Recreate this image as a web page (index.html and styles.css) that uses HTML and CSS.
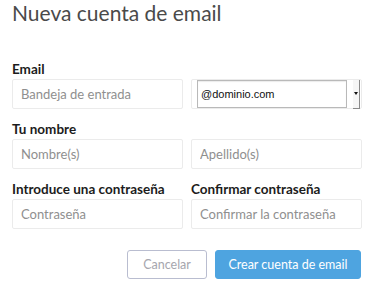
FILE: index.html
```html
<!DOCTYPE html>
<html lang="es">
<head>
    <meta charset="UTF-8">
    <meta name="viewport" content="width=device-width, initial-scale=1.0">
    <title>Nueva cuenta de email</title>
    <link rel="stylesheet" href="styles.css">
</head>
<body>
    <div class="dialog">
        <h1 class="title">Nueva cuenta de email</h1>
        <div class="form">
            <div class="field">
                <label class="label">Email</label>
                <input type="text" class="input" placeholder="Bandeja de entrada">
            </div>
            <div class="field">
                <span class="label"></span>
                <div class="select-wrap">
                    <div class="select-box">@dominio.com</div>
                    <div class="select-btn"><span class="arrow"></span></div>
                </div>
            </div>

            <div class="field">
                <label class="label">Tu nombre</label>
                <input type="text" class="input" placeholder="Nombre(s)">
            </div>
            <div class="field">
                <span class="label"></span>
                <input type="text" class="input" placeholder="Apellido(s)">
            </div>

            <div class="field">
                <label class="label">Introduce una contraseña</label>
                <input type="password" class="input" placeholder="Contraseña">
            </div>
            <div class="field">
                <label class="label">Confirmar contraseña</label>
                <input type="password" class="input" placeholder="Confirmar la contraseña">
            </div>
        </div>
        <div class="actions">
            <button class="btn btn-cancel">Cancelar</button>
            <button class="btn btn-primary">Crear cuenta de email</button>
        </div>
    </div>
</body>
</html>
```

FILE: styles.css
```css
body {
    margin: 0;
    font-family: 'Lato', 'Noto Sans', sans-serif;
    background-color: #ffffff;
    color: #222;
}
.dialog {
    padding: 0 12px;
}
.title {
    margin: 0;
    font-size: 21px;
    line-height: 26px;
    font-weight: 400;
    color: #4a4a4a;
}
.form {
    display: grid;
    grid-template-columns: 1fr 1fr;
    column-gap: 8px;
    row-gap: 12px;
    margin-top: 35px;
}
.field {
    display: flex;
    flex-direction: column;
}
.label {
    display: block;
    height: 16px;
    line-height: 16px;
    font-size: 13.5px;
    font-weight: 700;
    color: #1c1c1c;
    margin-bottom: 2px;
    white-space: nowrap;
}
.input {
    box-sizing: border-box;
    height: 30px;
    width: 100%;
    margin: 0;
    padding: 0 8px;
    border: 1px solid #ebebeb;
    border-radius: 2px;
    font-family: 'Lato', 'Noto Sans', sans-serif;
    font-size: 13px;
    color: #333;
    outline: none;
}
.input::placeholder {
    color: #8f8f8f;
}
.select-wrap {
    box-sizing: border-box;
    height: 30px;
    display: flex;
    align-items: center;
    padding: 0 1px 0 5px;
    border: 1px solid #ebebeb;
    border-radius: 2px;
}
.select-box {
    box-sizing: border-box;
    width: 150px;
    height: 28px;
    line-height: 26px;
    padding: 0 3px;
    border: 1px solid #b9b9b9;
    box-shadow: inset 0 1px 1px rgba(0, 0, 0, 0.08);
    font-family: 'Liberation Sans', Arial, sans-serif;
    font-size: 11px;
    color: #111;
}
.select-btn {
    box-sizing: border-box;
    width: 7px;
    height: 29px;
    margin-left: 6px;
    background-color: #f6f6f6;
    border-right: 1px solid #8a8a8a;
    border-bottom: 1px solid #8a8a8a;
    display: flex;
    align-items: center;
    justify-content: center;
}
.arrow {
    width: 0;
    height: 0;
    border-left: 2px solid transparent;
    border-right: 2px solid transparent;
    border-top: 3px solid #111;
}
.actions {
    display: flex;
    justify-content: flex-end;
    gap: 8px;
    margin-top: 21px;
    padding-right: 1px;
}
.btn {
    box-sizing: border-box;
    height: 29px;
    border-radius: 3px;
    font-family: 'Lato', 'Noto Sans', sans-serif;
    font-size: 12.5px;
    cursor: pointer;
}
.btn-cancel {
    width: 80px;
    background-color: #fff;
    border: 1px solid #b9bdd0;
    color: #a6a6ae;
}
.btn-primary {
    width: 146px;
    background-color: #4ea4e0;
    border: 1px solid #4ea4e0;
    color: #fff;
}
```
